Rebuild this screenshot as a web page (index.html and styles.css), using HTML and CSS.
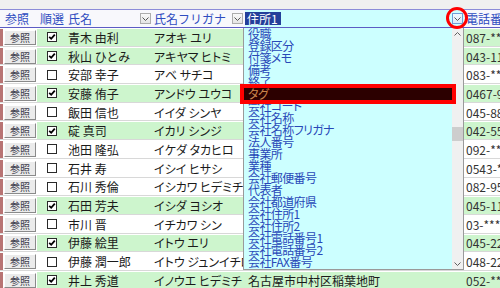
FILE: index.html
```html
<!DOCTYPE html>
<html lang="ja">
<head>
  <meta charset="UTF-8" />
  <title>顧客一覧</title>
  <link rel="stylesheet" href="styles.css">
</head>
<body>
  <div class="topbar"></div>

  <div class="cols head">
    <div class="h-btn">参照</div>
    <div class="h-chk">順選</div>
    <div class="h-name">氏名<span class="dd"><svg width="7" height="4" viewBox="0 0 7 4"><path d="M0.5 0.5 L3.5 3.5 L6.5 0.5" fill="none" stroke="#555" stroke-width="1"/></svg></span></div>
    <div class="h-kana">氏名フリガナ<span class="dd"><svg width="7" height="4" viewBox="0 0 7 4"><path d="M0.5 0.5 L3.5 3.5 L6.5 0.5" fill="none" stroke="#555" stroke-width="1"/></svg></span></div>
    <div class="h-addr combo"><span class="sel">住所1</span><span class="dd dd-on"><svg width="7" height="4" viewBox="0 0 7 4"><path d="M0.5 0.5 L3.5 3.5 L6.5 0.5" fill="none" stroke="#555" stroke-width="1"/></svg></span></div>
    <div class="h-tel">電話番号</div>
  </div>

  <div class="rows">
    <div class="cols row on"><div class="c-btn"><button class="ref">参照</button></div><div class="c-chk"><span class="box checked"></span></div><div class="c-name">青木 由利</div><div class="c-kana">アオキ ユリ</div><div class="c-addr"></div><div class="c-tel">087-***-****</div></div>
    <div class="cols row on"><div class="c-btn"><button class="ref">参照</button></div><div class="c-chk"><span class="box checked"></span></div><div class="c-name">秋山 ひとみ</div><div class="c-kana">アキヤマ ヒトミ</div><div class="c-addr"></div><div class="c-tel">043-11*-****</div></div>
    <div class="cols row"><div class="c-btn"><button class="ref">参照</button></div><div class="c-chk"><span class="box"></span></div><div class="c-name">安部 幸子</div><div class="c-kana">アベ サチコ</div><div class="c-addr"></div><div class="c-tel">083-***-****</div></div>
    <div class="cols row on"><div class="c-btn"><button class="ref">参照</button></div><div class="c-chk"><span class="box checked"></span></div><div class="c-name">安藤 侑子</div><div class="c-kana">アンドウ ユウコ</div><div class="c-addr"></div><div class="c-tel">0467-9*-****</div></div>
    <div class="cols row"><div class="c-btn"><button class="ref">参照</button></div><div class="c-chk"><span class="box"></span></div><div class="c-name">飯田 信也</div><div class="c-kana">イイダ シンヤ</div><div class="c-addr"></div><div class="c-tel">045-88*-****</div></div>
    <div class="cols row on"><div class="c-btn"><button class="ref">参照</button></div><div class="c-chk"><span class="box checked"></span></div><div class="c-name">碇 真司</div><div class="c-kana">イカリ シンジ</div><div class="c-addr"></div><div class="c-tel">042-55*-****</div></div>
    <div class="cols row"><div class="c-btn"><button class="ref">参照</button></div><div class="c-chk"><span class="box"></span></div><div class="c-name">池田 隆弘</div><div class="c-kana">イケダ タカヒロ</div><div class="c-addr"></div><div class="c-tel">092-***-****</div></div>
    <div class="cols row"><div class="c-btn"><button class="ref">参照</button></div><div class="c-chk"><span class="box"></span></div><div class="c-name">石井 寿</div><div class="c-kana">イシイ ヒサシ</div><div class="c-addr"></div><div class="c-tel">0543-**-****</div></div>
    <div class="cols row"><div class="c-btn"><button class="ref">参照</button></div><div class="c-chk"><span class="box"></span></div><div class="c-name">石川 秀倫</div><div class="c-kana">イシカワ ヒデミチ</div><div class="c-addr"></div><div class="c-tel">082-95*-****</div></div>
    <div class="cols row on"><div class="c-btn"><button class="ref">参照</button></div><div class="c-chk"><span class="box checked"></span></div><div class="c-name">石田 芳夫</div><div class="c-kana">イシダ ヨシオ</div><div class="c-addr"></div><div class="c-tel">045-11*-****</div></div>
    <div class="cols row"><div class="c-btn"><button class="ref">参照</button></div><div class="c-chk"><span class="box"></span></div><div class="c-name">市川 晋</div><div class="c-kana">イチカワ シン</div><div class="c-addr"></div><div class="c-tel">03-****-****</div></div>
    <div class="cols row on"><div class="c-btn"><button class="ref">参照</button></div><div class="c-chk"><span class="box checked"></span></div><div class="c-name">伊藤 絵里</div><div class="c-kana">イトウ エリ</div><div class="c-addr"></div><div class="c-tel">045-22*-****</div></div>
    <div class="cols row"><div class="c-btn"><button class="ref">参照</button></div><div class="c-chk"><span class="box"></span></div><div class="c-name">伊藤 潤一郎</div><div class="c-kana">イトウ ジュンイチロウ</div><div class="c-addr"></div><div class="c-tel">048-22*-****</div></div>
    <div class="cols row on"><div class="c-btn"><button class="ref">参照</button></div><div class="c-chk"><span class="box checked"></span></div><div class="c-name">井上 秀道</div><div class="c-kana">イノウエ ヒデミチ</div><div class="c-addr">名古屋市中村区稲葉地町</div><div class="c-tel">052-***-****</div></div>
  </div>

  <!-- dropdown of the 住所1 combo -->
  <div class="drop">
    <div class="items">
      <div class="item">役職</div>
      <div class="item">登録区分</div>
      <div class="item">付箋メモ</div>
      <div class="item">備考</div>
      <div class="item">終了</div>
      <div class="item mark">タグ</div>
      <div class="item">会社コード</div>
      <div class="item">会社名称</div>
      <div class="item">会社名称フリガナ</div>
      <div class="item">法人番号</div>
      <div class="item">事業所</div>
      <div class="item">業種</div>
      <div class="item">会社郵便番号</div>
      <div class="item">代表者</div>
      <div class="item">会社都道府県</div>
      <div class="item">会社住所1</div>
      <div class="item">会社住所2</div>
      <div class="item">会社電話番号1</div>
      <div class="item">会社電話番号2</div>
      <div class="item">会社FAX番号</div>
    </div>
    <div class="sbar">
      <span class="arrow"><svg width="7" height="4" viewBox="0 0 7 4"><path d="M0.5 3.5 L3.5 0.5 L6.5 3.5" fill="none" stroke="#606060" stroke-width="1"/></svg></span>
      <span class="thumb"></span>
      <span class="arrow down"><svg width="7" height="4" viewBox="0 0 7 4"><path d="M0.5 0.5 L3.5 3.5 L6.5 0.5" fill="none" stroke="#606060" stroke-width="1"/></svg></span>
    </div>
  </div>

  <div class="ring"></div>
</body>
</html>
```

FILE: styles.css
```css
* { box-sizing: border-box; }

body {
  margin: 0;
  width: 500px;
  height: 288px;
  overflow: hidden;
  position: relative;
  background: #ffffff;
  font-family: "Noto Sans CJK JP", sans-serif;
  font-size: 12px;
  color: #1a1a1a;
}

.topbar {
  height: 9px;
  background: #f0f0f0;
}

.cols {
  display: grid;
  grid-template-columns: 37px 29px 86px 93px 219px 36px;
}

.cols > div {
  display: flex;
  align-items: center;
  white-space: nowrap;
  overflow: hidden;
}

/* header */
.head {
  height: 19px;
  border-top: 1px solid #8c8cd8;
  border-bottom: 1px solid #5c5cc4;
  background: #f8f8fc;
  color: #2f4cc0;
}

.h-btn { padding-left: 5px; }
.h-chk { padding-left: 3px; }
.h-name { padding-left: 2px; justify-content: space-between; padding-right: 1px; }
.h-kana { padding-left: 2px; justify-content: space-between; padding-right: 2px; }
.h-tel { padding-left: 2px; }

.combo {
  background: #ccffff;
  justify-content: space-between;
  padding-right: 1px;
}

.sel {
  background: #233f9a;
  color: #ffffff;
  padding: 0 3px 0 2px;
  line-height: 13px;
}

.dd {
  display: inline-flex;
  align-items: center;
  justify-content: center;
  width: 11px;
  height: 11px;
  border: 1px solid #adadad;
  background: linear-gradient(#fafafa, #e4e4e4);
}

.dd-on {
  border-color: #6f9ed8;
  background: linear-gradient(#f2f8fe, #dcecfa);
}

/* rows */
.row {
  height: 18.7px;
  border-bottom: 1px solid #d8d8d8;
  padding-top: 1px;
}

.row.on > div:not(.c-btn) {
  background: #cdf5cd;
}

.c-btn {
  border-left: 3px solid #b87474;
  padding-left: 1px;
}

.ref {
  width: 32px;
  height: 15px;
  padding: 0;
  margin: 0;
  font-family: "Noto Sans CJK JP", sans-serif;
  font-size: 10px;
  line-height: 13px;
  color: #3a3a4a;
  background: #ebebeb;
  border: 1px solid;
  border-color: #ffffff #8a8a8a #8a8a8a #ffffff;
}

.c-chk { justify-content: center; }

.box {
  width: 10px;
  height: 10px;
  border: 1px solid #2a2a2a;
  background: #ffffff;
}

.box.checked {
  background: #ffffff url("data:image/svg+xml;utf8,<svg xmlns='http://www.w3.org/2000/svg' viewBox='0 0 8 8'><path d='M1.2 3.8 L3.2 5.8 L6.8 1.6' fill='none' stroke='black' stroke-width='1.8'/></svg>") center / 8px 8px no-repeat;
}

.c-name { padding-left: 2px; }
.c-kana { padding-left: 2px; font-feature-settings: "palt"; }
.c-addr { padding-left: 3px; }
.c-tel { padding-left: 2px; color: #333333; }

/* dropdown list */
.drop {
  position: absolute;
  left: 243px;
  top: 28px;
  width: 221px;
  height: 242px;
  display: flex;
  background: #ccffff;
  border: 1px solid #9a9a9a;
  border-top: none;
}

.items {
  flex: 1;
}

.item {
  height: 12px;
  line-height: 12px;
  padding-left: 4px;
  font-size: 12px;
  letter-spacing: -0.6px;
  color: #2848b8;
  white-space: nowrap;
  font-feature-settings: "palt";
}

.item.mark {
  position: relative;
  background: #2c0000;
  color: #c8844c;
  outline: 4px solid #ff0000;
}

.sbar {
  width: 11px;
  background: #f0f0f0;
  display: flex;
  flex-direction: column;
  align-items: center;
}

.arrow {
  height: 11px;
  display: flex;
  align-items: center;
}

.arrow.down { margin-top: auto; }

.thumb {
  width: 11px;
  height: 14px;
  margin-top: 88px;
  background: #cdcdcd;
}

/* annotation ring round the combo button */
.ring {
  position: absolute;
  left: 446px;
  top: 7px;
  width: 22px;
  height: 22px;
  border: 3px solid #ff0000;
  border-radius: 50%;
}
```
